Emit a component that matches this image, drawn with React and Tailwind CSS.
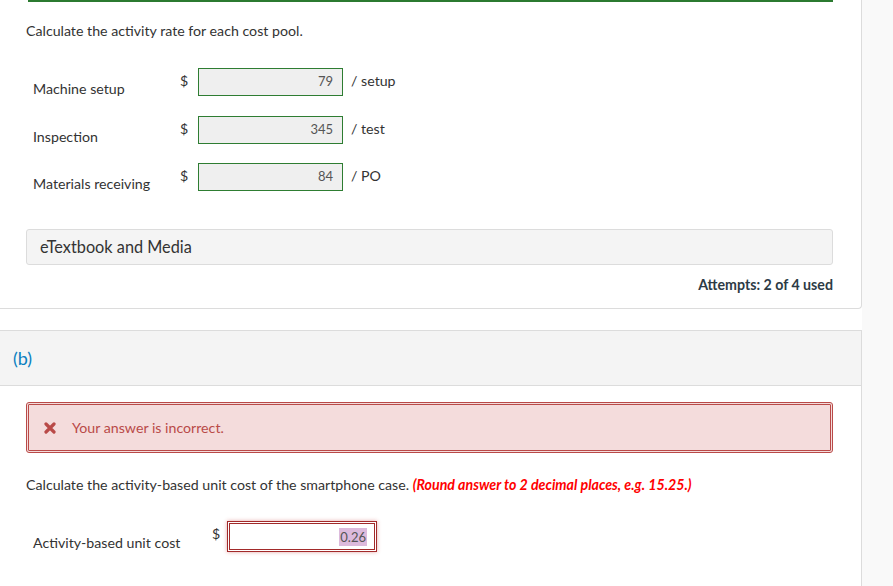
import React from 'react';

const rows = [
    { label: 'Machine setup', value: '79', unit: '/ setup' },
    { label: 'Inspection', value: '345', unit: '/ test' },
    { label: 'Materials receiving', value: '84', unit: '/ PO' },
];

const RateRow = ({ label, value, unit }) => (
    <div className="flex items-start h-[28px]">
        <div className="w-[147px] mt-[11px] leading-5">{label}</div>
        <div className="w-[18px] mt-[3px] leading-5">$</div>
        <div className="w-[145px] h-[28px] bg-[#efefef] border border-[#2e7d32] flex items-center justify-end pr-[9px] text-[13px] text-[#555]">
            {value}
        </div>
        <div className="ml-[8px] mt-[3px] leading-5">{unit}</div>
    </div>
);

const CrossIcon = () => (
    <svg width="12" height="12" viewBox="0 0 12 12" className="shrink-0">
        <path d="M2 2 L10 10 M10 2 L2 10" stroke="#b94a48" strokeWidth="3.2" strokeLinecap="round" />
    </svg>
);

const App = () => {
    return (
        <div
            className="flex w-[893px] h-[586px] bg-white text-[14.2px] text-[#333] overflow-hidden"
            style={{ fontFamily: 'Lato, "Open Sans", sans-serif' }}
        >
            <div className="w-[862px] shrink-0 flex flex-col">
                {/* part (a) card */}
                <div className="h-[309px] border-r border-b border-[#dcdcdc] rounded-br-[4px] pl-[26px] pr-[28px]">
                    <div className="ml-[2px] h-[2px] bg-[#2b7a30]"></div>
                    <p className="mt-[19px] leading-5">Calculate the activity rate for each cost pool.</p>
                    <div className="mt-[27px] pl-[7px] flex flex-col gap-[19.5px]">
                        {rows.map(r => <RateRow key={r.label} {...r} />)}
                    </div>
                    <div className="mt-[38px] h-[36px] bg-[#f4f4f4] border border-[#dcdcdc] rounded-[3px] flex items-center pl-[13px] text-[16.3px]">
                        eTextbook and Media
                    </div>
                    <div className="mt-[10px] text-right font-bold leading-5 text-[#2d3b45]">Attempts: 2 of 4 used</div>
                </div>

                <div className="h-[21px]"></div>

                {/* part (b) */}
                <div className="flex-1 border-r border-[#dcdcdc]">
                    <div className="h-[56px] bg-[#f4f4f4] border-y border-[#dcdcdc] flex items-center pl-[13px] text-[18px] text-[#0a7fc0]">
                        (b)
                    </div>
                    <div className="pl-[26px] pr-[28px]">
                        <div className="mt-[16px] h-[51px] bg-[#f4dcdc] border-[3px] border-double border-[#b94a48] rounded-[3px] flex items-center pl-[15px] gap-[16px] text-[#b94a48]">
                            <CrossIcon />
                            <span className="leading-5">Your answer is incorrect.</span>
                        </div>
                        <p className="mt-[22px] leading-5">
                            Calculate the activity-based unit cost of the smartphone case.{' '}
                            <span className="text-[#f00] font-bold italic">(Round answer to 2 decimal places, e.g. 15.25.)</span>
                        </p>
                        <div className="mt-[26px] pl-[7px] flex items-start h-[30px]">
                            <div className="w-[179px] mt-[12px] leading-5">Activity-based unit cost</div>
                            <div className="w-[15px] mt-[3px] leading-5">$</div>
                            <div className="w-[150px] h-[31px] bg-white border-[3px] border-double border-[#a22a2a] shadow-[0_0_4px_rgba(200,60,60,0.45)] flex items-center justify-end pr-[7px] text-[13px] text-[#555]">
                                <span className="bg-[#dcbadc] px-[1px] leading-[18px]">0.26</span>
                            </div>
                        </div>
                    </div>
                </div>
            </div>
            <div className="flex-1 bg-[#f9f9f9]"></div>
        </div>
    );
};

export default App;
